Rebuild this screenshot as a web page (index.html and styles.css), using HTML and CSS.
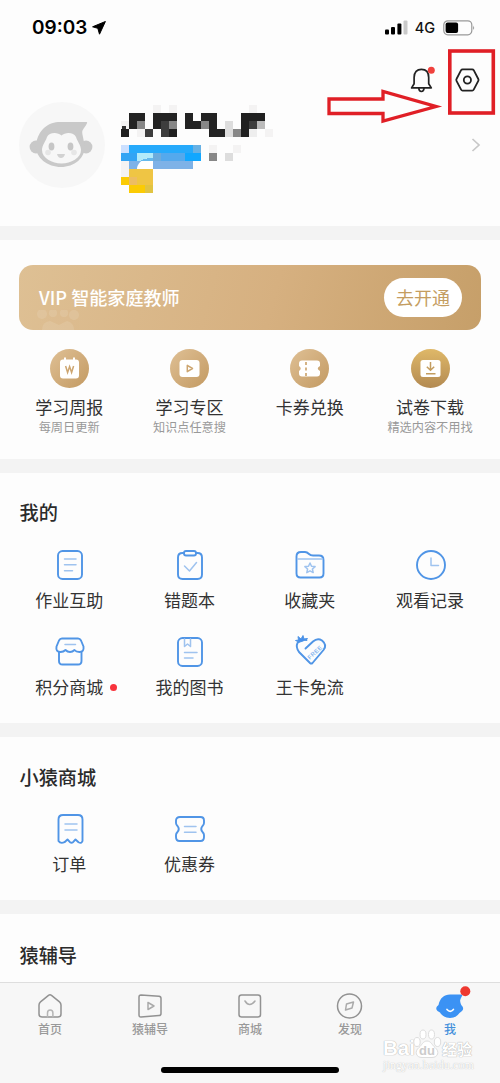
FILE: index.html
```
<!DOCTYPE html>
<html lang="zh-CN">
<head>
<meta charset="utf-8">
<title>我的</title>
<link rel="stylesheet" href="styles.css">
</head>
<body>
<svg width="0" height="0" class="defs">
  <defs>
    <linearGradient id="gold" x1="0" y1="0" x2="1" y2="1"><stop offset="0" stop-color="#dfc095"/><stop offset="1" stop-color="#c39a62"/></linearGradient>
    <linearGradient id="gold2" x1="0" y1="0" x2="0" y2="1"><stop offset="0" stop-color="#dfb868"/><stop offset="1" stop-color="#b38a52"/></linearGradient>
  </defs>
</svg>
<div class="screen">
  <header class="profile">
    <div class="status">
      <span class="time">09:03</span>
      <svg class="location" width="14" height="14" viewBox="0 0 14 14"><path d="M13.4.5.6 5.8l5.2 1.5L7.5 13.2Z" fill="#000" stroke="#000" stroke-linejoin="round"/></svg>
      <svg class="signal" width="23" height="15" viewBox="0 0 23 15"><g fill="#000"><rect y="9.5" width="4" height="5" rx="1"/><rect x="6" y="7" width="4" height="7.5" rx="1"/><rect x="12.4" y="3.5" width="4" height="11" rx="1"/></g><rect x="18.5" y=".5" width="4" height="14" rx="1" fill="#c9c9c9"/></svg>
      <span class="network">4G</span>
      <svg class="battery" width="32" height="16" viewBox="0 0 32 16"><rect x=".8" y=".8" width="28" height="14" rx="4" fill="none" stroke="#999" stroke-width="1.2"/><rect x="2.6" y="2.6" width="12.5" height="10.4" rx="2" fill="#000"/><path d="M30.3 5.5q1.6 2.3 0 4.6Z" fill="#777"/></svg>
    </div>
    <div class="actions">
      <svg width="28" height="28" viewBox="0 0 28 28"><g fill="none" stroke="#222" stroke-width="1.7" stroke-linejoin="round" stroke-linecap="round"><path d="M6.1 11.5C6.1 6 9 3.3 13.4 3.3s7.3 2.7 7.3 8.2v6.2l2.6 4.2H3.6l2.5-4.2Z"/><path d="M10.8 22.3q.2 3.2 2.6 3.2t2.6-3.2"/></g><circle cx="23.3" cy="4.3" r="3.5" fill="#f0413d"/></svg>
      <svg width="26" height="26" viewBox="0 0 26 26" fill="none" stroke="#222" stroke-width="1.8" stroke-linejoin="round"><path d="M8.600 2.300h9.600q1 0 1.500.9l4.600 8.800q.5 1 0 1.900l-4.600 8.800q-.5 1-1.500 1H8.600q-1 0-1.500-1l-4.600-8.800q-.5-1 0-1.900l4.600-8.800q.5-.9 1.500-.9Z"/><circle cx="13.400" cy="13" r="3.600"/></svg>
    </div>
    <div class="user">
      <svg class="avatar" width="86" height="86" viewBox="0 0 86 86"><circle cx="43" cy="43" r="43" fill="#f7f7f7"/><g fill="#c9c9c9"><circle cx="17" cy="45" r="6.400"/><circle cx="67" cy="45" r="6.400"/><path d="M17 43C19 27 30 20 41 20h26.500q1 0 .5 1.200c-1 2.600-3 4.200-4.500 7.200-1 2.400 1 7 2 14.600C67 56 55 65 42 65S16 56 17 43Z"/></g><path d="M42.500 33.500C46 30 55 30 57 35c1 4 5 8 5 13 0 8-10 13.500-19.500 13.500S23 56 23 48c0-5 4-9 5-13 2-5 11-5 14.500-1.500Z" fill="#f7f7f7"/><g fill="#c6c6c6"><ellipse cx="32.500" cy="44.500" rx="2.900" ry="3.900"/><ellipse cx="51.500" cy="44.500" rx="2.900" ry="3.900"/><path d="M38 52h8q-1 4-4 4t-4-4Z" opacity=".75"/><circle cx="29" cy="50.500" r="2.800" opacity=".35"/><circle cx="55" cy="50.500" r="2.800" opacity=".35"/></g></svg>
      <svg class="mosaic" width="154" height="88" viewBox="0 0 154 88" shape-rendering="crispEdges">
        <path d="M33 0h8v8h-8zM49 0h8v8h-8zM129 0h8v8h-8zM1 16h8v8H1zM17 24h16v8H17zM145 24h8v8h-8zM1 56h8v16H1zM89 40h8v8h-8zM113 40h8v8h-8z" fill="#f4f3f3"/>
        <path d="M9 8h16v8h-8v8H9zM33 8h24v8h-8v8H33zM65 8h8v8h8v8H65zM81 8h16v16h8v8H89V16h-8z" fill="#232323"/>
        <path d="M121 8h24v8h-8v8h-8v8h-8zM1 24h8v8H1zM49 24h8v8h-8z" fill="#202020"/>
        <path d="M2 21h4v3H2z" fill="#333"/>
        <path d="M33 24h-8v8h8zM41 24h8v8h-8zM41 16h8v8h-8zM129 16h8v8h-8z" fill="#3d3d3d"/>
        <path d="M17 16h8v8h-8zM49 16h8v8h-8zM81 16h8v8h-8zM113 24h8v8h-8zM89 48h8v8h-8z" fill="#878787"/>
        <path d="M137 16h8v8h-8z" fill="#bbb"/><path d="M105 16h8v16h-8zM105 48h8v8h-8z" fill="#ddd"/><path d="M129 24h8v8h-8z" fill="#eee"/>
        <path d="M1 40h8v8H1z" fill="#cce0ff"/><path d="M9 40h72v8H9z" fill="#26aafb"/><path d="M73 40h8v8h-8z" fill="#67b1e4"/>
        <path d="M1 48h16v8H1z" fill="#32a4f4"/><path d="M17 48h16v8H17z" fill="#b1eafa"/><path d="M33 48h32v8H33z" fill="#54a9ed"/><path d="M33 48h8v8h-8z" fill="#6dabdc"/><path d="M65 48h16v8H65z" fill="#11a7ff"/>
        <path d="M9 56h16v8H9zM33 56h40v8H33z" fill="#7eb2e7"/><path d="M17 63q2-10 16-10v11H17z" fill="#fff" shape-rendering="auto"/><path d="M20 56q5-3 13-3v3z" fill="#65b9ec"/>
        <path d="M9 64h24v16H9z" fill="#efc544"/><path d="M9 72h8v8H9z" fill="#edbd62"/><path d="M1 72h8v8H1zM9 80h16v8H9z" fill="#fbcb04"/><path d="M25 80h8v8h-8z" fill="#e1c442"/>
      </svg>
      <svg class="chevron" width="10" height="14" viewBox="0 0 10 14" fill="none" stroke="#c8c8c8" stroke-width="1.700"><path d="m1.500 1 6.500 6-6.500 6"/></svg>
    </div>
  </header>

  <section class="vip">
    <div class="banner">
      <svg class="banner-mark" width="44" height="20" viewBox="0 0 44 20" fill="#fff" opacity=".1"><circle cx="5" cy="4" r="5"/><circle cx="16" cy="3" r="4"/><circle cx="27" cy="3" r="4"/><circle cx="37" cy="5" r="5"/><path d="M5 20q0-8 8-9l9 4 8-4q7 2 7 9Z"/></svg>
      <span class="banner-title">VIP 智能家庭教师</span><span class="open">去开通</span>
    </div>
    <div class="grid gold">
      <div class="item"><svg width="39" height="39" viewBox="0 0 39 39"><circle cx="19.500" cy="19.500" r="19.500" fill="url(#gold)"/><path d="M13 10.500h1v-2h2v2h7v-2h2v2h1q3 0 3 3v13q0 3-3 3H13q-3 0-3-3v-13q0-3 3-3Z" fill="#fff"/><path d="m15.600 17 2 6.500 2-6 2 6 2-6.500" fill="none" stroke="#cda671" stroke-width="1.500"/></svg><b>学习周报</b><small>每周日更新</small></div>
      <div class="item"><svg width="39" height="39" viewBox="0 0 39 39"><circle cx="19.500" cy="19.500" r="19.500" fill="url(#gold)"/><rect x="9.500" y="11" width="20" height="17" rx="3" fill="#fff"/><path d="M17.300 16.300v6.400l5.200-3.200Z" fill="none" stroke="#cda671" stroke-width="1.500" stroke-linejoin="round"/></svg><b>学习专区</b><small>知识点任意搜</small></div>
      <div class="item"><svg width="39" height="39" viewBox="0 0 39 39"><circle cx="19.500" cy="19.500" r="19.500" fill="url(#gold)"/><path d="M12 11.500h15q3 0 3 3v2.500q-4.500 2.500 0 5v2.500q0 3-3 3H12q-3 0-3-3V22q3.500-2.500 0-5v-2.500q0-3 3-3Z" fill="#fff"/><path d="M16 13v14" stroke="#cda671" stroke-width="1.700" stroke-dasharray="3 2.500"/></svg><b>卡券兑换</b></div>
      <div class="item"><svg width="39" height="39" viewBox="0 0 39 39"><circle cx="19.500" cy="19.500" r="19.500" fill="url(#gold2)"/><rect x="9.500" y="11" width="20" height="17" rx="2.500" fill="#fff"/><path d="M19.500 13v8m-3.700-3.200 3.700 3.500 3.700-3.500M15 24.700h9.500" fill="none" stroke="#c39d60" stroke-width="1.500"/></svg><b>试卷下载</b><small>精选内容不用找</small></div>
    </div>
  </section>

  <section class="mine">
    <h2>我的</h2>
    <div class="grid">
      <div class="item"><svg class="line" viewBox="0 0 32 32"><rect x="4" y="2" width="24" height="28" rx="4.500"/><path class="pale" d="M10.500 10H22M10.500 15.700H22M10.500 21.700h8"/></svg><b>作业互助</b></div>
      <div class="item"><svg class="line" viewBox="0 0 32 32"><path d="M10 4H8.500Q4 4 4 8.500v17Q4 30 8.500 30h15q4.500 0 4.500-4.500v-17Q28 4 23.500 4H22"/><rect x="10" y="2" width="12" height="4.500" rx="2"/><path class="pale" d="m10.500 17 5 5 7-8.500"/></svg><b>错题本</b></div>
      <div class="item"><svg class="line" viewBox="0 0 32 32"><path d="M2.500 7.500q0-4.500 4.500-4.500h4q2 0 4 2 1.500 1.500 4 1.500h6q4.500 0 4.500 4.500v13.500q0 4-4 4H6.500q-4 0-4-4Z"/><path class="pale" d="M3.500 10h25M16 14l1.500 3.200 3.600.4-2.700 2.400.8 3.600-3.200-1.800-3.200 1.800.8-3.600-2.700-2.400 3.600-.4Z"/></svg><b>收藏夹</b></div>
      <div class="item"><svg class="line" viewBox="0 0 32 32"><circle cx="16" cy="16" r="14"/><path class="pale" d="M16 9v7.500h7.500"/></svg><b>观看记录</b></div>
      <div class="item"><svg class="line" viewBox="0 0 32 32"><path d="M8 2.500h16q2 0 3 2l2.500 6q.7 5.500-4 5.500-3.500 0-5-2-2 2-4.500 2t-4.500-2q-2 2-5 2-5 0-4-5.500l2.500-6q1-2 3-2Z"/><path d="M5 16v9q0 3.500 3.500 3.500h15.500q3.500 0 3.500-3.500v-9"/><path class="pale" d="M11 8.500h10.500"/></svg><b class="dot">积分商城</b></div>
      <div class="item"><svg class="line" viewBox="0 0 32 32"><rect x="4" y="2" width="24" height="28" rx="4.500"/><path class="pale" d="M10.500 3v7.500l3-2.500 3 2.500V3M10.500 16.500H23M10.500 22h8.500"/></svg><b>我的图书</b></div>
      <div class="item"><svg class="line" viewBox="0 0 32 32"><path d="M11.500 12.500 19 5.500q4.500-4 9-1 5.500 4.500 1.500 9.500L18.500 27q-1.200 1.200-2.500 0L5 16Q1.500 11 3.500 7 6.500 3 12.500 4"/><path d="m5 6-3.500-1.500L4.500 4 4 .5 7 3 9-.5l1 3.500 3.500-.5L9 5Z" fill="#468fec" stroke-width="1"/><text class="free" transform="translate(15.800 23.800) rotate(-42)">FREE</text></svg><b>王卡免流</b></div>
    </div>
  </section>

  <section class="mall">
    <h2>小猿商城</h2>
    <div class="grid">
      <div class="item"><svg class="line" viewBox="0 0 32 32"><path d="M4.500 28V6.500q0-4.500 4.500-4.500h15q4.500 0 4.500 4.500V28q-1 3-4 1.200l-3-2.700-2.500 2.700q-1.500 1-3 0l-2.500-2.700-3 2.700Q6.500 31 4.500 28Z"/><path class="pale" d="M11 11h12M11 17h12"/></svg><b>订单</b></div>
      <div class="item"><svg class="line" viewBox="0 0 32 32"><path d="M6 4h20.500q3.500 0 3.500 3.500V10q0 1.500-1.500 3-2.500 3 0 6 1.500 1.500 1.500 3v2q0 4-3.500 4H5.500q-3.500 0-3.500-4v-2q0-1.500 1.500-3 2.500-3 0-6Q2 11.500 2 10V7.500Q2 4 6 4Z"/><path class="pale" d="M10.500 13.500h11.500M10.500 19.200h11.500"/></svg><b>优惠券</b></div>
    </div>
  </section>

  <section class="tutor"><h2>猿辅导</h2></section>

  <nav class="tabs">
    <div class="tab"><svg width="28" height="28" viewBox="0 0 28 28"><path d="M3 13q0-2 1.500-3.200l8-6.500q1.500-1.200 3 0l8 6.500Q25 11 25 13v9q0 3-3 3H6q-3 0-3-3Z"/><path d="M11.500 25v-4q0-3 2.700-3t2.700 3v4" stroke="#b5b5b5"/></svg>首页</div>
    <div class="tab"><svg width="28" height="28" viewBox="0 0 28 28"><path d="M5 3l18 1.200q2 .2 2 2.200v15q0 2-2 2.200L5 25q-2 .1-2-2V5q0-2 2-2Z"/><path d="M12 10.500v7l6-3.500Z" stroke="#aaa"/></svg>猿辅导</div>
    <div class="tab"><svg width="28" height="28" viewBox="0 0 28 28"><rect x="3" y="3" width="21.500" height="22" rx="2.500"/><path d="M9 9q4.500 7 10 0" stroke="#aaa"/></svg>商城</div>
    <div class="tab"><svg width="28" height="28" viewBox="0 0 28 28"><circle cx="13.500" cy="14" r="12"/><path d="m10.500 12 7-2-1.500 6-6.500 2Z" stroke="#aaa"/></svg>发现</div>
    <div class="tab active"><svg width="34" height="32" viewBox="0 0 34 32"><path d="M5.500 15C7 8 11 4.500 17 4.500h11.500q1.500 0 .5 1.500l-1.500 3q-.8 1.500 0 4 .5 2 2 3.500 1.500 2.500-.5 4.500l-2.500 2c-2 3-5.500 5-9.500 5S9 26 7 22.500l-2.500-1.500q-3-3 1-6Z" fill="#3b92f4" stroke="none"/><path d="M14 19.500q3.200 3.600 6.400 0" stroke="#fff" stroke-width="1.700"/><circle cx="32.300" cy="1.200" r="5" fill="#ee3830" stroke="none"/></svg>我</div>
  </nav>
  <div class="home-bar"></div>

  <svg class="pointer" width="172" height="72" viewBox="0 0 172 72" fill="none" stroke="#e01f26"><rect x="124.800" y="4" width="43.500" height="62" stroke-width="3.600"/><path d="M4 52h54v-7.500L111 59.500 58 74v-7.500H4Z" stroke-width="3.300"/></svg>
  <div class="watermark">
    <div class="brand"><span class="bai">Bai</span><svg width="29" height="30" viewBox="0 0 29 30"><g fill="#fff" stroke="#ddd"><ellipse cx="4" cy="13" rx="3.200" ry="4.500"/><ellipse cx="10" cy="5.500" rx="3" ry="4.500"/><ellipse cx="18.500" cy="5.500" rx="3" ry="4.500"/><ellipse cx="24.500" cy="13" rx="3.200" ry="4.500"/><path d="M14 12c4 0 5 4 8 6.500 5 4 3 10-3 10H9c-6 0-8-6-3-10C9 16 10 12 14 12Z"/></g><text x="14" y="26" text-anchor="middle">du</text></svg><span class="cn">经验</span></div>
    <div class="site">jingyan.baidu.com</div>
  </div>
</div>
</body>
</html>
```
FILE: styles.css
```
* { box-sizing: border-box; }
body { margin: 0; font-family: "Noto Sans CJK SC", sans-serif; color: #333; }
.defs { position: absolute; }
.screen { position: relative; display: flex; flex-direction: column; width: 500px; height: 1083px; overflow: hidden; background: #fdfdfd; }
section, .profile { flex: none; border-bottom: 14px solid #f3f3f3; }

.profile { height: 240px; }
.status { display: flex; align-items: center; height: 55px; padding: 0 25px 0 32px; }
.time { width: 56px; font: 600 19px/24px Inter, sans-serif; letter-spacing: 0; color: #000; }
.location { margin-left: 4px; }
.signal { margin-left: auto; }
.network { margin: 1px 8px 0 7px; font: 500 14.500px/20px Inter, sans-serif; color: #111; }
.actions { display: flex; justify-content: flex-end; align-items: center; gap: 18px; height: 50px; padding-right: 20px; }
.actions svg { display: block; }
.user { display: flex; height: 88px; padding: 0 19px; }
.avatar { margin-top: -3px; }
.mosaic { margin-left: 15px; }
.chevron { margin: 33px 0 0 auto; }

.vip { height: 233px; padding-top: 25px; }
.banner { position: relative; display: flex; align-items: center; justify-content: space-between; height: 65px; margin: 0 19px; padding: 0 19px 0 20px; border-radius: 14px; background: linear-gradient(105deg, #dec094, #d6b080 55%, #c69f69); overflow: hidden; }
.banner-mark { position: absolute; left: 18px; bottom: 0; }
.banner-title { padding-bottom: 2px; font-size: 18.100px; line-height: 26px; font-weight: 500; color: #fff; }
.open { width: 78px; height: 39px; border-radius: 20px; background: #fff; color: #c49d61; font-size: 18px; line-height: 38px; text-align: center; }

.grid { display: grid; grid-template-columns: repeat(4, 120.300px); padding-left: 9px; }
.item { display: flex; flex-direction: column; align-items: center; height: 87px; white-space: nowrap; }
.item b { position: relative; font-size: 17px; font-weight: 400; line-height: 24px; margin-top: 7px; }
.gold { padding-top: 19px; }
.item small { font-size: 12.200px; line-height: 16px; color: #999; }
h2 { margin: 0; padding-left: 19.500px; font-size: 19.200px; font-weight: 500; line-height: 28px; color: #2b2b2b; }
.mine { height: 264px; padding-top: 25px; }
.mine .grid { padding-top: 23px; }
.mall { height: 177px; padding-top: 26px; }
.mall .grid { padding-top: 22px; }
.tutor { height: 68px; padding-top: 27px; border: 0; }
.line { display: block; width: 32px; height: 32px; margin-left: 1px; fill: none; stroke: #5095e6; stroke-width: 1.900; stroke-linecap: round; stroke-linejoin: round; overflow: visible; }
.pale { stroke: #9fc3ef; stroke-width: 1.500; }
.free { font: 700 6px "Liberation Sans", sans-serif; fill: #8bb9ef; stroke: none; letter-spacing: .4px; }
.dot::after { content: ""; position: absolute; right: -13.500px; top: 9px; width: 7px; height: 7px; border-radius: 50%; background: #f8333c; }

.tabs { display: grid; grid-template-columns: repeat(5, 1fr); height: 101px; border-top: 1px solid #dedede; background: #f7f7f7; }
.tab { display: flex; flex-direction: column; align-items: center; padding-top: 9px; font-size: 12px; line-height: 18px; font-weight: 500; color: #999; }
.tab svg { fill: none; stroke: #929292; stroke-width: 1.500; stroke-linejoin: round; stroke-linecap: round; overflow: visible; }
.tab.active { padding-top: 7px; color: #438fdb; }
.tab.active svg { margin-bottom: -2px; }
.home-bar { position: absolute; left: 161px; top: 1067px; width: 178px; height: 6px; border-radius: 3px; background: #000; }
.pointer { position: absolute; left: 325px; top: 47px; overflow: visible; }
.watermark { position: absolute; left: 383px; top: 1028px; color: #fff; }
.brand { display: flex; align-items: flex-end; height: 31px; font: 700 20.500px/22px "Liberation Sans", sans-serif; text-shadow: 0 0 1px #aaa, 0 0 1px #bbb; }
.bai { width: 30px; }
.brand text { font: 700 13px "Liberation Sans", sans-serif; fill: #ccc; text-shadow: none; }
.brand .cn { font: 700 15px/20px "Noto Sans CJK SC", sans-serif; }
.site { font: 12px/12px "Liberation Serif", serif; letter-spacing: .1px; text-shadow: 0 0 1px #aaa; }
```
